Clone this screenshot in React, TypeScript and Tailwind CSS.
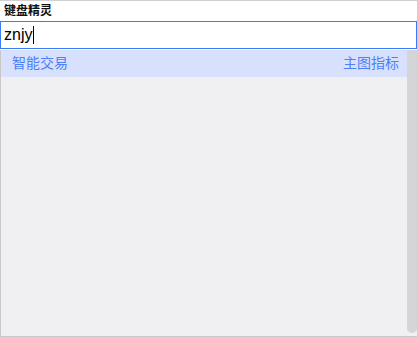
import React from "react";

const font = { fontFamily: '"Liberation Sans", "Noto Sans CJK SC", sans-serif' };

const items = [{ name: "智能交易", type: "主图指标" }];

export default function App() {
  return (
    <div className="w-[418px] h-[337px] bg-white border-r border-t border-[#d0d0d0] flex flex-col" style={font}>
      <div className="h-[20px] pl-[4px] pt-[3px] text-[12px] leading-[14px] font-bold text-[#111]">键盘精灵</div>
      <div className="h-[28px] border border-[#3b7bf6] bg-white flex items-center pl-[3px] text-[16px] text-black">
        <span>znjy</span>
        <span className="w-px h-[18px] bg-black ml-[1px]" />
      </div>
      <div className="flex-1 mt-[1px] flex bg-[#f0f0f2] border-l border-b border-[#c8c8c8]">
        <div className="flex-1 min-w-0">
          {items.map(item => (
            <div key={item.name} className="h-[27px] bg-[#d7e1fd] flex items-center justify-between pl-[11px] pr-[8px] text-[14px] text-[#4d7ff6]">
              <span>{item.name}</span>
              <span>{item.type}</span>
            </div>
          ))}
        </div>
        <div className="w-[10px] mb-[3px] bg-[#d5d5d8] rounded-b-[5px]" />
      </div>
    </div>
  );
}
